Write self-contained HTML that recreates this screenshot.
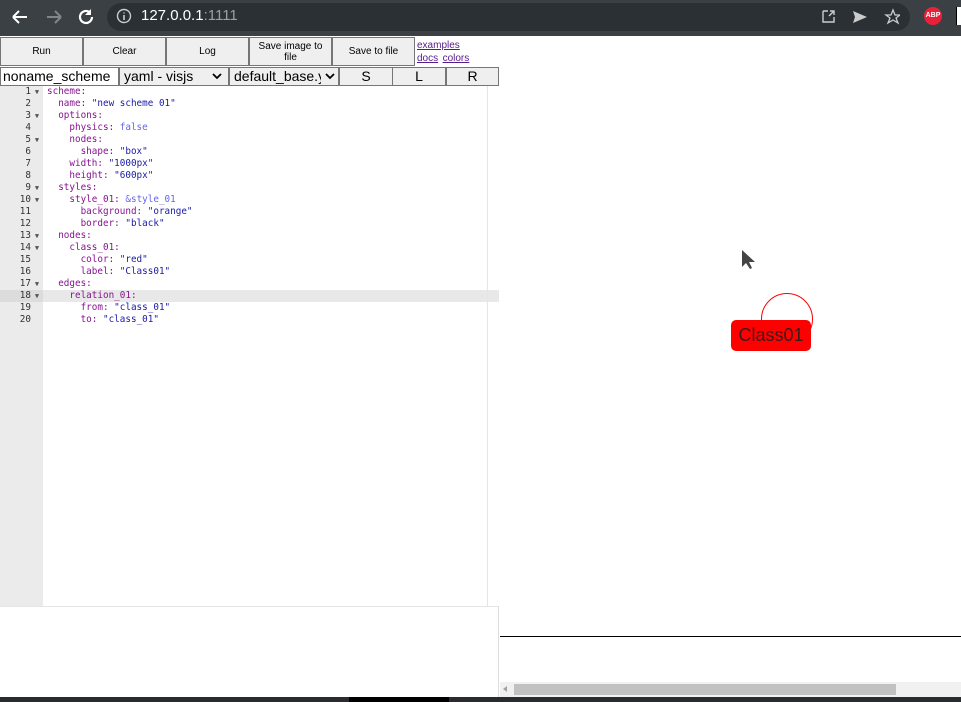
<!DOCTYPE html><html><head><style>
body{margin:0;width:961px;height:702px;overflow:hidden;position:relative;font-family:"Liberation Sans",sans-serif;background:#fff}
.a{position:absolute}
.btn{position:absolute;top:37px;height:29px;background:#efefef;border:1px solid #767676;box-sizing:border-box;font-size:10px;display:flex;align-items:center;justify-content:center;text-align:center;line-height:11px}
.r2{position:absolute;top:67px;height:19px;box-sizing:border-box;border:1px solid #767676;font-size:14px;line-height:17px;background:#efefef}
.code{position:absolute;left:47px;top:86px;font-family:"DejaVu Sans Mono",monospace;font-size:9.3px;line-height:12px;white-space:pre;color:#881391}
.g{position:absolute;left:0;top:86px;width:43px;font-family:"DejaVu Sans Mono",monospace;font-size:9.3px;line-height:12px;color:#333;text-align:right}
.g div{height:12px}
.g span{display:inline-block;width:12px;text-align:center;font-size:7px;color:#555}
.s{color:#1a1aa6}.k{color:#6666ee}
a{color:#551a8b;font-size:10px;text-decoration:underline}
</style></head><body>
<div class="a" style="left:0;top:0;width:961px;height:36px;background:#3a4044"></div>
<div class="a" style="left:107px;top:3px;width:803px;height:28px;border-radius:14px;background:#2b3034"></div>
<svg class="a" style="left:10px;top:6px" width="100" height="22"><path d="M3 11h14M3 11l6-6M3 11l6 6" stroke="#fff" stroke-width="2" fill="none"/><path d="M37 11h14M51 11l-6-6M51 11l-6 6" stroke="#80868b" stroke-width="2" fill="none"/><path d="M82 11a6 6 0 1 1-2-4.5" stroke="#fff" stroke-width="2.2" fill="none"/><path d="M81 3v6h-6z" fill="#fff"/></svg>
<svg class="a" style="left:116px;top:8px" width="16" height="16"><circle cx="8" cy="8" r="6.5" stroke="#ccc" stroke-width="1.4" fill="none"/><path d="M8 7v5M8 4.5v1" stroke="#ccc" stroke-width="1.6"/></svg>
<div class="a" style="left:141px;top:7px;font-size:15px;color:#fff">127.0.0.1<span style="color:#9aa0a6">:1111</span></div>
<svg class="a" style="left:820px;top:8px" width="80" height="18"><path d="M3 3h5M3 3v11h11v-5M9 8l5-5M10 3h4v4" stroke="#ccc" stroke-width="1.4" fill="none"/><path d="M33 3l14 6-14 6 2-6z" fill="#ccc"/><path d="M73 2l2 5h5l-4 3 2 5-5-3-5 3 2-5-4-3h5z" stroke="#ccc" stroke-width="1.3" fill="none"/></svg>
<div class="a" style="left:924px;top:7px;width:18px;height:18px;border-radius:50%;background:#e8203a;color:#fff;font-size:7px;font-weight:bold;text-align:center;line-height:18px">ABP</div>
<div class="a" style="left:956px;top:7px;width:6px;height:18px;background:#fff;border-left:1px solid #000"></div>
<div class="btn" style="left:0;width:83px">Run</div>
<div class="btn" style="left:83px;width:83px">Clear</div>
<div class="btn" style="left:166px;width:83px">Log</div>
<div class="btn" style="left:249px;width:83px">Save image to<br>file</div>
<div class="btn" style="left:332px;width:83px">Save to file</div>
<div class="a" style="left:417px;top:38px;line-height:11px"><a>examples</a><br><a>docs</a> <a>colors</a></div>
<div class="r2" style="left:0;width:119px;background:#fff;padding-left:2px">noname_scheme</div>
<div class="r2" style="left:119px;width:110px;padding-left:4px">yaml - visjs<svg style="position:absolute;right:6px;top:5px" width="10" height="7"><path d="M1 1l4 4 4-4" stroke="#000" stroke-width="1.8" fill="none"/></svg></div>
<div class="r2" style="left:229px;width:110px;padding-left:4px;overflow:hidden;white-space:nowrap">default_base.ya<span style="position:absolute;right:0;top:0;width:17px;height:17px;background:#efefef"><svg style="position:absolute;left:4px;top:5px" width="10" height="7"><path d="M1 1l4 4 4-4" stroke="#000" stroke-width="1.8" fill="none"/></svg></span></div>
<div class="r2" style="left:339px;width:54px;text-align:center">S</div>
<div class="r2" style="left:392px;width:54px;text-align:center">L</div>
<div class="r2" style="left:446px;width:53px;text-align:center">R</div>
<div class="a" style="left:0;top:86px;width:43px;height:520px;background:#ebebeb"></div>
<div class="a" style="left:0;top:290px;width:499px;height:12px;background:#e8e8e8"></div>
<div class="a" style="left:0;top:290px;width:43px;height:12px;background:#dcdcdc"></div>
<div class="a" style="left:487px;top:86px;width:1px;height:520px;background:#e5e5e5"></div>
<div class="g"><div>1<span>▼</span></div><div>2<span></span></div><div>3<span>▼</span></div><div>4<span></span></div><div>5<span>▼</span></div><div>6<span></span></div><div>7<span></span></div><div>8<span></span></div><div>9<span>▼</span></div><div>10<span>▼</span></div><div>11<span></span></div><div>12<span></span></div><div>13<span>▼</span></div><div>14<span>▼</span></div><div>15<span></span></div><div>16<span></span></div><div>17<span>▼</span></div><div>18<span>▼</span></div><div>19<span></span></div><div>20<span></span></div></div>
<div class="code">scheme:
  name: <span class="s">"new scheme 01"</span>
  options:
    physics: <span class="k">false</span>
    nodes:
      shape: <span class="s">"box"</span>
    width: <span class="s">"1000px"</span>
    height: <span class="s">"600px"</span>
  styles:
    style_01: <span class="k">&amp;style_01</span>
      background: <span class="s">"orange"</span>
      border: <span class="s">"black"</span>
  nodes:
    class_01:
      color: <span class="s">"red"</span>
      label: <span class="s">"Class01"</span>
  edges:
    relation_01:
      from: <span class="s">"class_01"</span>
      to: <span class="s">"class_01"</span></div>
<div class="a" style="left:0;top:606px;width:498px;height:91px;border-top:1px solid #e5e5e5;border-right:1px solid #ddd"></div>
<svg class="a" style="left:738px;top:248px" width="18" height="24"><path d="M4 2v17l4-4 4 6 2-1-3-6h6z" fill="#444"/></svg>
<div class="a" style="left:761px;top:293px;width:52px;height:52px;border:1px solid #f00;border-radius:50%;box-sizing:border-box"></div>
<div class="a" style="left:731px;top:320px;width:80px;height:31px;background:#f00;border-radius:5px;color:#3a1a1a;font-size:18px;line-height:31px;text-align:center">Class01</div>
<div class="a" style="left:500px;top:636px;width:461px;height:1px;background:#000"></div>
<div class="a" style="left:500px;top:682px;width:461px;height:15px;background:#f1f1f1"></div>
<div class="a" style="left:514px;top:684px;width:382px;height:11px;background:#c1c1c1"></div>
<div class="a" style="left:503px;top:686px;width:0;height:0;border:3px solid transparent;border-right:4px solid #a3a3a3;border-left:0"></div>
<div class="a" style="left:0;top:697px;width:961px;height:5px;background:#2a2b2e"></div>
<div class="a" style="left:349px;top:697px;width:100px;height:5px;background:#000"></div>
</body></html>
